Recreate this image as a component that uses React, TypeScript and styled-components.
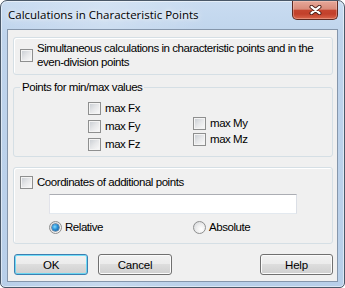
import React from 'react';
import styled, { createGlobalStyle } from 'styled-components';

const UI_FONT = `"Liberation Sans", Arial, sans-serif`;

const GlobalStyle = createGlobalStyle`
    html, body {
        margin: 0;
        padding: 0;
        background: #ffffff;
    }
    * {
        box-sizing: border-box;
    }
`;

const CheckItem = ({ label, children }: { label?: string; children?: React.ReactNode }) => (
    <CheckLabel>
        <CheckBox />
        <span>{children ?? label}</span>
    </CheckLabel>
);

const RadioItem = ({ label, checked }: { label: string; checked?: boolean }) => (
    <RadioLabel>
        <RadioDot $checked={!!checked} />
        <span>{label}</span>
    </RadioLabel>
);

const App = () => {
    return (
        <>
            <GlobalStyle />
            <Window>
                <TitleBar>
                    <Caption>Calculations in Characteristic Points</Caption>
                    <CloseButton aria-label="Close">
                        <svg width="13" height="10" viewBox="0 0 13 10">
                            <path
                                d="M2.5 1.8 L10.5 8.2 M10.5 1.8 L2.5 8.2"
                                stroke="#4b1d16"
                                strokeWidth="4"
                                strokeLinecap="round"
                                fill="none"
                            />
                            <path
                                d="M2.5 1.8 L10.5 8.2 M10.5 1.8 L2.5 8.2"
                                stroke="#ffffff"
                                strokeWidth="2.2"
                                strokeLinecap="round"
                                fill="none"
                            />
                        </svg>
                    </CloseButton>
                </TitleBar>
                <Client>
                    <TopPanel>
                        <CheckItem>
                            Simultaneous calculations in characteristic points and in the
                            <br />
                            even-division points
                        </CheckItem>
                    </TopPanel>

                    <GroupBox>
                        <Legend>Points for min/max values</Legend>
                        <Columns>
                            <ForceColumn>
                                <Row $h={18}>
                                    <CheckItem label="max Fx" />
                                </Row>
                                <Row $h={18}>
                                    <CheckItem label="max Fy" />
                                </Row>
                                <Row $h={18}>
                                    <CheckItem label="max Fz" />
                                </Row>
                            </ForceColumn>
                            <MomentColumn>
                                <Row $h={16}>
                                    <CheckItem label="max My" />
                                </Row>
                                <Row $h={16}>
                                    <CheckItem label="max Mz" />
                                </Row>
                            </MomentColumn>
                        </Columns>
                    </GroupBox>

                    <CoordPanel>
                        <Row $h={16}>
                            <CheckItem label="Coordinates of additional points" />
                        </Row>
                        <CoordInput type="text" />
                        <RadioRow>
                            <RadioSlot>
                                <RadioItem label="Relative" checked />
                            </RadioSlot>
                            <RadioItem label="Absolute" />
                        </RadioRow>
                    </CoordPanel>

                    <ButtonBar>
                        <Button $primary>OK</Button>
                        <Button>Cancel</Button>
                        <Spacer />
                        <Button $w={73}>Help</Button>
                    </ButtonBar>
                </Client>
            </Window>
        </>
    );
};

const Window = styled.div`
    width: 345px;
    height: 288px;
    display: flex;
    flex-direction: column;
    padding: 0 6px 5px 6px;
    border: 1px solid #4a5868;
    border-radius: 7px 7px 5px 5px;
    background: linear-gradient(90deg, rgba(255, 255, 255, 0) 0%, rgba(255, 255, 255, 0.2) 30%, rgba(255, 255, 255, 0) 60%),
        linear-gradient(180deg, #c9dcf1 0%, #bfd4ec 12%, #b8cfe9 100%);
    box-shadow: inset 0 0 0 1px rgba(255, 255, 255, 0.5);
    font-family: ${UI_FONT};
    font-size: 11.5px;
    letter-spacing: -0.45px;
    color: #000000;
`;
const TitleBar = styled.div`
    height: 28px;
    flex: none;
    display: flex;
    align-items: flex-start;
    justify-content: space-between;
    padding-left: 1px;
`;
const Caption = styled.div`
    padding-top: 7px;
    font-family: 'Open Sans', 'Noto Sans', sans-serif;
    font-size: 11.5px;
    letter-spacing: 0;
    line-height: 14px;
    color: #000000;
    text-shadow: 0 0 8px rgba(255, 255, 255, 0.9), 0 0 4px rgba(255, 255, 255, 0.8);
    white-space: nowrap;
`;
const CloseButton = styled.div`
    width: 46px;
    height: 19px;
    display: flex;
    align-items: center;
    justify-content: center;
    border: 1px solid #5e2a22;
    border-top: none;
    border-radius: 0 0 5px 5px;
    background: linear-gradient(180deg, #e6a899 0%, #d98c7b 45%, #c5452f 52%, #c2402b 72%, #d9654b 100%);
    box-shadow: inset 0 0 0 1px rgba(255, 220, 210, 0.35);
`;
const Client = styled.div`
    flex: 1;
    display: flex;
    flex-direction: column;
    padding: 7px 4px 6px 5px;
    border: 1px solid #8596ab;
    background: #f0f0f0;
`;
const Panel = styled.div`
    border: 1px solid #d5dfe5;
    border-radius: 3px;
    box-shadow: inset 1px 1px 0 #ffffff;
`;
const TopPanel = styled(Panel)`
    padding: 3px 6px 5px 6px;
    line-height: 14px;
    display: flex;
    align-items: center;
`;
const GroupBox = styled.fieldset`
    margin: 5px 0 0 0;
    padding: 0;
    min-width: 0;
    border: 1px solid #d5dfe5;
    border-radius: 3px;
`;
const Legend = styled.legend`
    margin-left: 6px;
    padding: 0 2px;
    line-height: 14px;
`;
const Columns = styled.div`
    display: grid;
    grid-template-columns: 105px auto;
    padding: 5px 0 3px 74px;
`;
const ForceColumn = styled.div`
    display: flex;
    flex-direction: column;
`;
const MomentColumn = styled.div`
    display: flex;
    flex-direction: column;
    padding-top: 16px;
`;
const Row = styled.div<{ $h: number }>`
    height: ${(p) => p.$h}px;
    display: flex;
    align-items: center;
`;
const CoordPanel = styled(Panel)`
    margin-top: 10px;
    padding: 6px 6px 7px 6px;
    display: flex;
    flex-direction: column;
`;
const CheckLabel = styled.label`
    display: flex;
    align-items: center;
    gap: 4px;
    line-height: 14px;
    white-space: nowrap;
`;
const CheckBox = styled.span`
    width: 13px;
    height: 13px;
    flex: none;
    border: 1px solid #8e8f8f;
    background: linear-gradient(135deg, #c6cbd1 0%, #e6e7e9 50%, #fbfbfb 100%);
    box-shadow: inset 0 0 0 1px #f4f4f4;
`;
const CoordInput = styled.input`
    width: 248px;
    height: 20px;
    margin: 4px 0 0 29px;
    padding: 0 3px;
    border: 1px solid;
    border-color: #abadb3 #dbdfe6 #e3e9ef #e2e3ea;
    background: #ffffff;
    outline: none;
    font-family: ${UI_FONT};
    font-size: 11.5px;
`;
const RadioRow = styled.div`
    height: 18px;
    margin: 4px 0 0 29px;
    display: flex;
    align-items: center;
`;
const RadioSlot = styled.div`
    width: 144px;
`;
const RadioLabel = styled.label`
    display: flex;
    align-items: center;
    gap: 3px;
    line-height: 14px;
`;
const RadioDot = styled.span<{ $checked: boolean }>`
    position: relative;
    width: 13px;
    height: 13px;
    flex: none;
    border: 1px solid #8e8f8f;
    border-radius: 50%;
    background: radial-gradient(circle at 65% 65%, #ffffff 0%, #eeeeee 45%, #cfd2d6 100%);
    &::after {
        content: '';
        display: ${(p) => (p.$checked ? 'block' : 'none')};
        position: absolute;
        left: 2px;
        top: 2px;
        width: 7px;
        height: 7px;
        border-radius: 50%;
        background: radial-gradient(circle at 40% 40%, #7fdcff 0%, #2a8fd6 45%, #0e4d86 100%);
        box-shadow: 0 0 0 0.5px #163c63;
    }
`;
const ButtonBar = styled.div`
    margin-top: 10px;
    padding-left: 1px;
    display: flex;
    gap: 10px;
`;
const Spacer = styled.div`
    flex: 1;
`;
const Button = styled.button<{ $primary?: boolean; $w?: number }>`
    width: ${(p) => p.$w ?? 74}px;
    height: 21px;
    padding: 0;
    border: 1px solid ${(p) => (p.$primary ? '#3c7fb1' : '#707070')};
    border-radius: 3px;
    background: linear-gradient(180deg, #f2f2f2 0%, #ebebeb 49%, #dddddd 50%, #cfcfcf 100%);
    box-shadow: inset 0 0 0 1px ${(p) => (p.$primary ? 'rgba(72, 215, 251, 0.75)' : '#fbfbfb')};
    font-family: ${UI_FONT};
    font-size: 11.5px;
    letter-spacing: -0.2px;
    color: #000000;
`;

export default App;
